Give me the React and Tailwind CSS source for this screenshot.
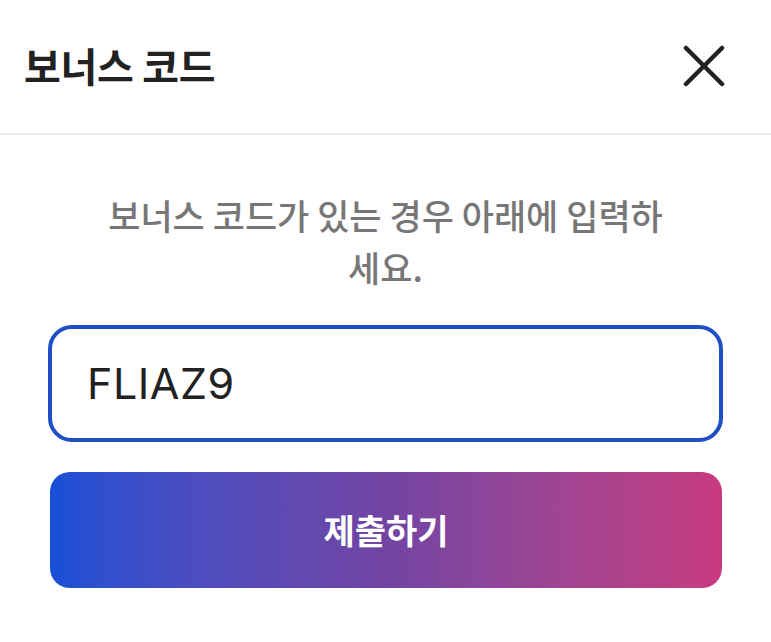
import React from "react";

export default function App() {
  return (
    <div className="w-[771px] h-[642px] bg-white overflow-hidden" style={{ fontFamily: '"Noto Sans CJK KR", "Noto Sans", sans-serif' }}>
      <header className="h-[135px] flex items-center justify-between pl-[24px] pr-[46px] border-b-[2px] border-[#ececec]">
        <h1 className="text-[40px] font-bold text-[#222222] leading-none tracking-[-0.3px] -mt-[4px]">보너스 코드</h1>
        <button className="w-[42px] h-[42px] flex items-center justify-center -mt-[2px]" aria-label="close">
          <svg width="42" height="42" viewBox="0 0 42 42" fill="none" stroke="#222222" strokeWidth="4.5" strokeLinecap="round">
            <line x1="3" y1="3" x2="39" y2="39" />
            <line x1="39" y1="3" x2="3" y2="39" />
          </svg>
        </button>
      </header>
      <main className="px-[48px] pt-[54px]">
        <p className="mx-[52px] text-center text-[35px] leading-[52px] font-medium text-[#777777]">
          보너스 코드가 있는 경우 아래에 입력하세요.
        </p>
        <div className="mt-[32px] h-[117px] rounded-[24px] border-[4px] border-[#1f4fc4] flex items-center pl-[35px]">
          <span className="text-[43px] text-[#222222] leading-none tracking-[0.5px]" style={{ fontFamily: 'Inter, "Liberation Sans", sans-serif' }}>FLIAZ9</span>
        </div>
        <button className="mt-[30px] mx-[2px] w-[672px] h-[116px] rounded-[20px] bg-gradient-to-r from-[#164fd6] via-[#7244a3] to-[#c93a80] flex items-center justify-center">
          <span className="text-[34px] font-bold text-white leading-none">제출하기</span>
        </button>
      </main>
    </div>
  );
}
